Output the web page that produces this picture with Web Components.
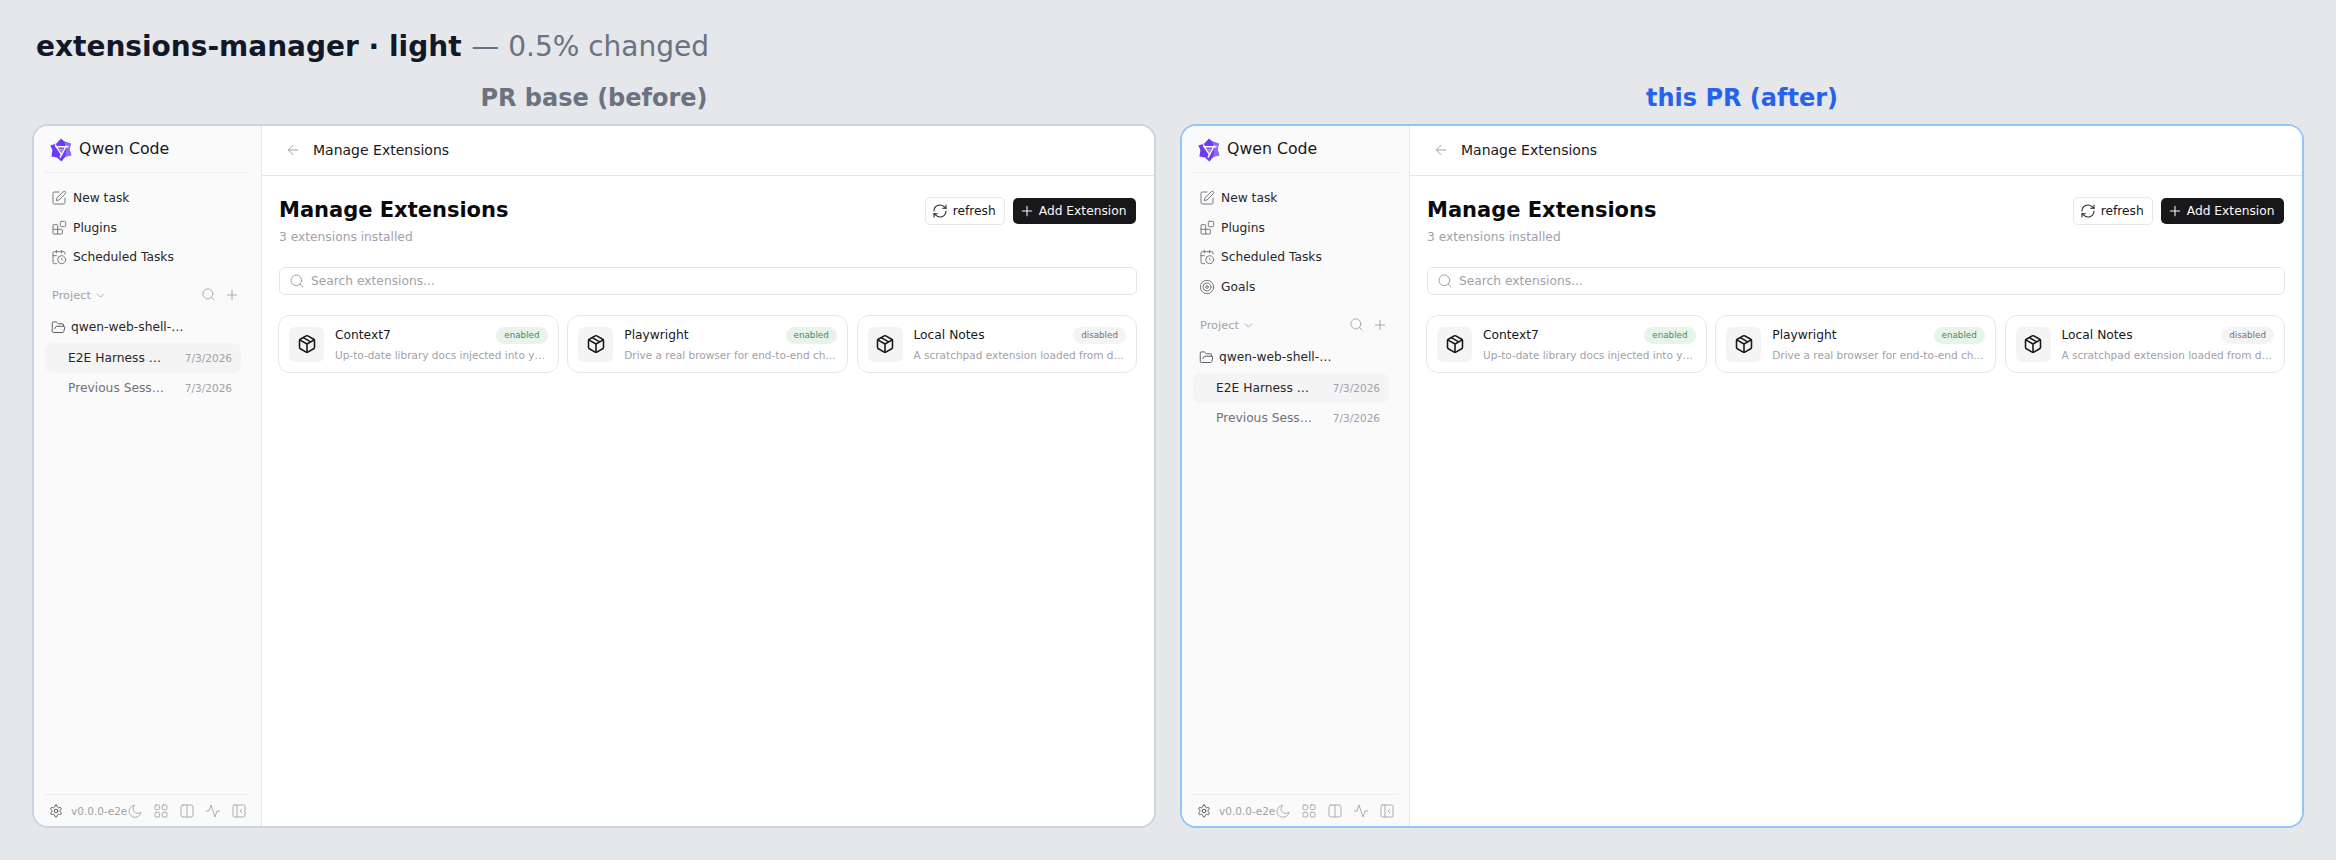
<!DOCTYPE html>
<html><head><meta charset="utf-8"><style>
html,body{margin:0;padding:0;background:#e5e7eb;font-family:"DejaVu Sans",sans-serif}
body{width:2336px;height:860px;overflow:hidden}
</style></head><body>
<compare-page></compare-page>
<template id="shell-t">
<style>
:host{display:flex;flex-direction:column;min-width:0}
.label{font-size:24px;font-weight:700;text-align:center;line-height:28px;height:28px;margin-bottom:12px;color:var(--lc);white-space:nowrap}
.win{height:704px;box-sizing:border-box;border:2px solid var(--bc);border-radius:16px;background:#fff;display:flex;overflow:hidden}
</style>
<div class="label"><slot name="label"></slot></div>
<div class="win"><app-sidebar id="sb"></app-sidebar><app-main></app-main></div>
</template>
<script>
const I={
 back:'<path d="M19 12H5M12 19l-7-7 7-7"/>',
 edit:'<path d="M12 3H5a2 2 0 0 0-2 2v14a2 2 0 0 0 2 2h14a2 2 0 0 0 2-2v-7"/><path d="M18.4 2.6a2.1 2.1 0 1 1 3 3L12 15l-4 1 1-4z"/>',
 plug:'<rect x="14" y="2" width="8" height="8" rx="1.5"/><path d="M10 21V8a1 1 0 0 0-1-1H4a1 1 0 0 0-1 1v12a1 1 0 0 0 1 1h12a1 1 0 0 0 1-1v-5a1 1 0 0 0-1-1H3"/>',
 sched:'<path d="M16 2v4M8 2v4M21 7.5V6a2 2 0 0 0-2-2H5a2 2 0 0 0-2 2v14a2 2 0 0 0 2 2h3.5M3 10h5"/><circle cx="16" cy="16" r="6"/><path d="M16 14v2l1 1"/>',
 goals:'<circle cx="12" cy="12" r="10"/><circle cx="12" cy="12" r="6"/><circle cx="12" cy="12" r="2"/>',
 search:'<circle cx="11" cy="11" r="8"/><path d="m21 21-4.3-4.3"/>',
 plus:'<path d="M5 12h14M12 5v14"/>',
 chev:'<path d="m6 9 6 6 6-6"/>',
 folder:'<path d="m6 14 1.5-2.9A2 2 0 0 1 9.24 10H20a2 2 0 0 1 1.94 2.5l-1.54 6a2 2 0 0 1-1.95 1.5H4a2 2 0 0 1-2-2V5a2 2 0 0 1 2-2h3.9a2 2 0 0 1 1.69.9l.81 1.2a2 2 0 0 0 1.67.9H18a2 2 0 0 1 2 2v2"/>',
 gear:'<path d="M12.2 2h-.4a2 2 0 0 0-2 2v.2a2 2 0 0 1-1 1.7l-.4.3a2 2 0 0 1-2 0l-.2-.1a2 2 0 0 0-2.7.7l-.2.4a2 2 0 0 0 .7 2.7l.2.1a2 2 0 0 1 1 1.7v.5a2 2 0 0 1-1 1.8l-.2.1a2 2 0 0 0-.7 2.7l.2.4a2 2 0 0 0 2.7.7l.2-.1a2 2 0 0 1 2 0l.4.3a2 2 0 0 1 1 1.7v.2a2 2 0 0 0 2 2h.4a2 2 0 0 0 2-2v-.2a2 2 0 0 1 1-1.7l.4-.3a2 2 0 0 1 2 0l.2.1a2 2 0 0 0 2.7-.7l.2-.4a2 2 0 0 0-.7-2.7l-.2-.1a2 2 0 0 1-1-1.8v-.5a2 2 0 0 1 1-1.7l.2-.1a2 2 0 0 0 .7-2.7l-.2-.4a2 2 0 0 0-2.7-.7l-.2.1a2 2 0 0 1-2 0l-.4-.3a2 2 0 0 1-1-1.7V4a2 2 0 0 0-2-2z"/><circle cx="12" cy="12" r="3"/>',
 moon:'<path d="M11 3.5A9 9 0 1 0 21 13.5 7 7 0 0 1 11 3.5z"/>',
 grid:'<rect x="3" y="3" width="7" height="7" rx="1.5"/><rect x="14" y="3" width="7" height="7" rx="1.5"/><rect x="3" y="14" width="7" height="7" rx="1.5"/><rect x="14" y="14" width="7" height="7" rx="1.5"/>',
 cols:'<rect x="3" y="3" width="18" height="18" rx="3"/><path d="M12 3v18"/>',
 pulse:'<path d="M22 12h-4l-3 9L9 3l-3 9H2"/>',
 side:'<rect x="3" y="3" width="18" height="18" rx="2"/><path d="M9 3v18M16 9.5 13.5 12l2.5 2.5"/>',
 refresh:'<path d="M3 12a9 9 0 0 1 15-6.7L21 8"/><path d="M21 3v5h-5"/><path d="M21 12a9 9 0 0 1-15 6.7L3 16"/><path d="M8 16H3v5"/>',
 box:'<path d="M11 21.7a2 2 0 0 0 2 0l7-4A2 2 0 0 0 21 16V8a2 2 0 0 0-1-1.7l-7-4a2 2 0 0 0-2 0l-7 4A2 2 0 0 0 3 8v8a2 2 0 0 0 1 1.7z"/><path d="M12 22V12M3.3 7 12 12l8.7-5M7.5 4.3l9 5.1"/>'
};
const ic=(n,s,c,w=2)=>`<svg width="${s}" height="${s}" viewBox="0 0 24 24" fill="none" stroke="${c}" stroke-width="${w}" stroke-linecap="round" stroke-linejoin="round" style="flex:none;display:block">${I[n]}</svg>`;

class ComparePage extends HTMLElement{constructor(){super();this.attachShadow({mode:'open'}).innerHTML=`
<style>
:host{display:block;padding:29px 32px 0}
h1{margin:0 0 0 4px;font-size:28px;line-height:36px;height:36px;font-weight:700;color:#111827;white-space:nowrap}
h1 span{font-weight:400;color:#6b7280}
.cols{display:grid;grid-template-columns:1124px 1124px;gap:24px;margin-top:19px}
</style>
<h1>extensions-manager · light <span>— 0.5% changed</span></h1>
<div class="cols">
<app-shell style="--lc:#6b7280;--bc:#cbd5e1"><span slot="label">PR base (before)</span></app-shell>
<app-shell goals style="--lc:#2563eb;--bc:#93c5fd"><span slot="label">this PR (after)</span></app-shell>
</div>`}}
class AppShell extends HTMLElement{constructor(){super();const s=this.attachShadow({mode:'open'});const f=document.getElementById('shell-t').content.cloneNode(true);if(this.hasAttribute('goals'))f.getElementById('sb').setAttribute('goals','');s.appendChild(f)}}
class NavItem extends HTMLElement{constructor(){super();this.attachShadow({mode:'open'}).innerHTML=`
<style>:host{display:flex;align-items:center;gap:6px;height:29.75px;padding-left:7px;font-size:12.25px;color:#27272a;white-space:nowrap}</style>
${ic(this.getAttribute('icon'),16,'#71717a',1.4)}<slot></slot>`}}
class SessionRow extends HTMLElement{constructor(){super();const a=this.hasAttribute('active');this.attachShadow({mode:'open'}).innerHTML=`
<style>:host{display:flex;align-items:center;justify-content:space-between;height:30px;border-radius:8px;padding:0 9px 0 23px;margin:0 9px 0 1px;font-size:12.25px;white-space:nowrap;color:${a?'#27272a':'#71717a'};background:${a?'#f4f4f5':'transparent'}}
span{font-size:10.5px;color:#a1a1aa}</style>
<slot></slot><span>7/3/2026</span>`}}
class AppSidebar extends HTMLElement{constructor(){super();this.attachShadow({mode:'open'});}
connectedCallback(){const g=this.hasAttribute('goals');
this.shadowRoot.innerHTML=`
<style>
:host{display:flex;flex-direction:column;width:228px;flex:none;box-sizing:border-box;background:#fafafa;border-right:1px solid #e8e8ea;padding:0 11px 0 10px}
.brand{display:flex;align-items:center;gap:6px;height:45px;padding:0 0 1px 5px;border-bottom:1px solid #eeeeef;font-size:15.75px;color:#18181b}
.nav{padding-top:10px}
.proj{display:flex;align-items:center;height:20px;margin-top:13px;padding:0 10.5px 0 8px;font-size:11.375px;color:#a1a1aa;gap:3px}
.proj .sp{flex:1}.proj .r{display:flex;gap:8px}
.folder{display:flex;align-items:center;gap:5px;height:30px;margin-top:7px;padding-left:7px;font-size:12.25px;color:#27272a;white-space:nowrap}
.sessions{display:flex;flex-direction:column;margin-top:1px}
.foot{margin-top:auto;height:31px;border-top:1px solid #eeeeef;display:flex;align-items:center;padding-left:5px;font-size:10.5px;color:#a1a1aa;white-space:nowrap}
.foot .v{margin-left:8px;width:59px}
.foot .ics{display:flex;gap:10px;margin-left:-3px}
</style>
<div class="brand"><svg width="24" height="24" viewBox="0 0 24 24" style="flex:none;position:relative;top:1px">
<path d="M12 .4 15.4 3.4 21.8 5.6 20.6 11.6 22.4 17.2 16.4 18.8 12.4 23.6 8 19.4 2.4 18.4 3.4 12.2 1.4 7.4 7.4 5.4z" fill="#6d3cf2"/>
<path d="M15.4 3.4 21.8 5.6 20.6 11.6 22.4 17.2 16.4 18.8 17 11z" fill="#8f6bf8"/>
<g fill="none" stroke="#fafafa" stroke-width="1.5" stroke-linecap="round" stroke-linejoin="round"><path d="M7 8.8H19"/><path d="M17.2 8 11.2 19.2"/><path d="M12.6 16.8 6.4 7"/></g>
<path d="M9.6 10.4h5.6l-2.8 4.8z" fill="#a98ffb"/></svg><span>Qwen Code</span></div>
<div class="nav">
<nav-item icon="edit">New task</nav-item><nav-item icon="plug">Plugins</nav-item><nav-item icon="sched">Scheduled Tasks</nav-item>${g?'<nav-item icon="goals">Goals</nav-item>':''}
</div>
<div class="proj"><span>Project</span>${ic('chev',13,'#a1a1aa',1.6)}<span class="sp"></span><span class="r">${ic('search',15,'#a1a1aa',1.4)}${ic('plus',16,'#a1a1aa',1.4)}</span></div>
<div class="folder">${ic('folder',15,'#52525b',1.5)}<span>qwen-web-shell-…</span></div>
<div class="sessions"><session-row active>E2E Harness …</session-row><session-row>Previous Sess…</session-row></div>
<div class="foot">${ic('gear',14,'#52525b',1.6)}<span class="v">v0.0.0-e2e</span><span class="ics">${['moon','grid','cols','pulse','side'].map(n=>ic(n,16,'#a1a1aa',1.3)).join('')}</span></div>`}}
class ExtCard extends HTMLElement{constructor(){super();const on=this.getAttribute('status')=='enabled';this.attachShadow({mode:'open'}).innerHTML=`
<style>
:host{display:flex;align-items:center;gap:11px;min-width:0;height:58px;box-sizing:border-box;border:1px solid #e7e7e9;border-radius:12px;padding:0 10px;background:#fff}
.i{width:35px;height:35px;border-radius:6px;background:#f4f4f5;display:flex;align-items:center;justify-content:center;flex:none}
.t{flex:1;min-width:0}
.top{display:flex;align-items:center;justify-content:space-between;height:18px;margin-bottom:3px;position:relative}
b{font-weight:400;font-size:12.25px;line-height:16px;align-self:flex-start;color:#18181b}
.p{font-size:8.75px;line-height:17px;height:17px;padding:0 8px;border-radius:9px;background:${on?'#e8f3ea':'#f4f4f5'};color:${on?'#3f8f5a':'#71717a'}}
.d{font-size:10.5px;color:#a1a1aa;white-space:nowrap;line-height:14px}
</style>
<div class="i">${ic('box',20,'#18181b',1.9)}</div>
<div class="t"><div class="top"><b>${this.getAttribute('name')}</b><span class="p">${this.getAttribute('status')}</span></div><div class="d"><slot></slot></div></div>`}}
class AppMain extends HTMLElement{constructor(){super();this.attachShadow({mode:'open'}).innerHTML=`
<style>
:host{display:flex;flex-direction:column;flex:1;min-width:0;background:#fff}
.bar{height:50px;box-sizing:border-box;border-bottom:1px solid #e7e7e9;display:flex;align-items:center;padding:0 0 1px 23px;gap:12px;font-size:14px;color:#18181b}
.body{padding:0 17px}
.head{display:flex;justify-content:space-between;margin-top:21px;height:48px}
h2{margin:0;font-size:21px;line-height:26px;font-weight:700;color:#09090b}
.sub{font-size:12.25px;line-height:16px;color:#a1a1aa;margin-top:6px}
.btns{display:flex;gap:8px;align-items:center;align-self:flex-start;margin-right:1px}
.btn{display:flex;align-items:center;box-sizing:border-box;border-radius:5px;font-size:12.25px;white-space:nowrap}
.ol{border:1px solid #e7e7e9;background:#fff;color:#18181b;height:28px;gap:5px;padding:0 8px 0 6px}
.pr{background:#18181b;color:#fafafa;height:26px;gap:4px;padding:0 9.5px 0 6px}
.search{display:flex;align-items:center;gap:6px;height:28px;box-sizing:border-box;border:1px solid #e4e4e7;border-radius:6px;margin-top:22px;padding-left:9px;font-size:12.25px;color:#a1a1aa}
.grid{display:grid;grid-template-columns:repeat(3,1fr);gap:8.75px;margin-top:20px;margin-left:-1px}
</style>
<div class="bar">${ic('back',16,'#a1a1aa',1.5)}<span>Manage Extensions</span></div>
<div class="body">
<div class="head"><div><h2>Manage Extensions</h2><div class="sub">3 extensions installed</div></div>
<div class="btns"><div class="btn ol">${ic('refresh',16,'#27272a',1.6)}refresh</div><div class="btn pr">${ic('plus',16,'#fafafa',1.6)}Add Extension</div></div></div>
<div class="search">${ic('search',16,'#a1a1aa',1.5)}<span>Search extensions...</span></div>
<div class="grid">
<ext-card name="Context7" status="enabled">Up-to-date library docs injected into y…</ext-card>
<ext-card name="Playwright" status="enabled">Drive a real browser for end-to-end ch…</ext-card>
<ext-card name="Local Notes" status="disabled">A scratchpad extension loaded from d…</ext-card>
</div></div>`}}
customElements.define('nav-item',NavItem);customElements.define('session-row',SessionRow);customElements.define('ext-card',ExtCard);
customElements.define('app-sidebar',AppSidebar);customElements.define('app-main',AppMain);customElements.define('app-shell',AppShell);customElements.define('compare-page',ComparePage);
</script>
</body></html>
